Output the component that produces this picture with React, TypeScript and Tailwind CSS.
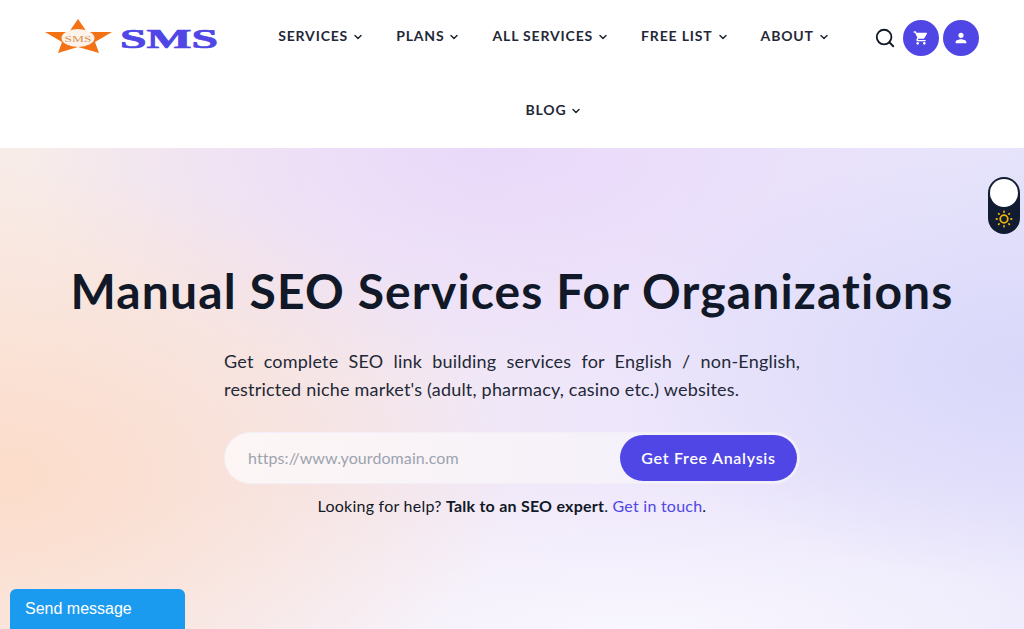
import { ChevronDown, Search } from "lucide-react";

const NAV = ["SERVICES", "PLANS", "ALL SERVICES", "FREE LIST", "ABOUT", "BLOG"];
const FONT = "font-['Lato','Noto_Sans',sans-serif]";

function Logo() {
  return (
    <svg width="176" height="40" viewBox="0 0 176 40" className="shrink-0">
      <polygon fill="#f47216" points="33,3 42,16 67,16 50,26 54,37 33,31 13,37 17,26 0,16 24,16" />
      <ellipse cx="33" cy="22" rx="16.5" ry="9" fill="#fdf3ea" />
      <text x="33" y="25.5" textAnchor="middle" fontFamily="Liberation Serif, serif" fontSize="9" fill="#d8904f" textLength="27" lengthAdjust="spacingAndGlyphs">SMS</text>
      <text x="75" y="32" fontFamily="Liberation Serif, serif" fontWeight="700" fontSize="27" fill="#4f46e5" stroke="#4f46e5" strokeWidth="0.7" textLength="98" lengthAdjust="spacingAndGlyphs">SMS</text>
    </svg>
  );
}

function CartIcon() {
  return (
    <svg viewBox="0 0 24 24" width="16" height="16" fill="#fff">
      <path d="M7 18c-1.1 0-2 .9-2 2s.9 2 2 2 2-.9 2-2-.9-2-2-2zM1 2v2h2l3.6 7.59-1.35 2.45c-.16.28-.25.61-.25.96 0 1.1.9 2 2 2h12v-2H7.42c-.14 0-.25-.11-.25-.25l.03-.12.9-1.63h7.45c.75 0 1.41-.41 1.75-1.03l3.58-6.49A1 1 0 0 0 20 4H5.21l-.94-2H1zm16 16c-1.1 0-2 .9-2 2s.9 2 2 2 2-.9 2-2-.9-2-2-2z" />
    </svg>
  );
}

function UserIcon() {
  return (
    <svg viewBox="0 0 24 24" width="16" height="16" fill="#fff">
      <path d="M12 12c2.21 0 4-1.79 4-4s-1.79-4-4-4-4 1.79-4 4 1.79 4 4 4zm0 2c-2.67 0-8 1.34-8 4v2h16v-2c0-2.66-5.33-4-8-4z" />
    </svg>
  );
}

function SunIcon() {
  const rays = [0, 45, 90, 135, 180, 225, 270, 315];
  return (
    <svg viewBox="0 0 20 20" width="18" height="18" fill="none" stroke="#eab308" strokeWidth="2" strokeLinecap="round">
      <circle cx="10" cy="10" r="4.2" />
      {rays.map((r) => (
        <line key={r} x1="10" y1="1.6" x2="10" y2="2.2" transform={`rotate(${r} 10 10)`} />
      ))}
    </svg>
  );
}

export default function App() {
  return (
    <div className={`relative h-[629px] w-[1024px] overflow-hidden bg-white text-[#111827] ${FONT}`}>
      <header className="flex h-[148px] items-start bg-white pl-[45px] pr-[45px] pt-[16px]">
        <Logo />
        <nav className="ml-[33px] flex w-[600px] flex-wrap justify-center">
          {NAV.map((n) => (
            <a key={n} className="mb-[34px] flex h-[40px] items-center px-[16px] pb-[1px] text-[14px] font-bold leading-[20px] tracking-[0.06em] text-[#1f2937] last:mb-0">
              {n}
              <ChevronDown size={12} strokeWidth={3} className="ml-[4px] mt-[2px]" />
            </a>
          ))}
        </nav>
        <div className="ml-auto flex items-center pt-[4px]">
          <span className="flex h-[36px] w-[36px] items-center justify-center">
            <Search size={22} strokeWidth={2} color="#111827" />
          </span>
          <span className="flex h-[36px] w-[36px] items-center justify-center rounded-full bg-[#4f46e5]"><CartIcon /></span>
          <span className="ml-[4px] flex h-[36px] w-[36px] items-center justify-center rounded-full bg-[#4f46e5]"><UserIcon /></span>
        </div>
      </header>

      <main className="relative flex h-[481px] flex-col items-center bg-[radial-gradient(ellipse_50%_65%_at_0%_68%,#fcdcca_0%,rgba(252,220,202,0)_100%),radial-gradient(ellipse_40%_45%_at_100%_45%,#d9d8fa_0%,rgba(217,216,250,0)_100%),radial-gradient(ellipse_45%_50%_at_48%_0%,#e9d9fa_0%,rgba(233,217,250,0)_100%),radial-gradient(ellipse_75%_35%_at_62%_100%,#f8f6fe_0%,rgba(248,246,254,0)_100%),linear-gradient(90deg,#f8ece8_0%,#eee6fb_60%,#e6e3fb_100%)]">
        <h1 className="mt-[113px] whitespace-nowrap text-[48px] font-bold leading-[60px] tracking-[1.13px] text-[#111827]">
          Manual SEO Services For Organizations
        </h1>
        <p className="mt-[26px] w-[576px] text-justify text-[18px] leading-[28px] tracking-[0.2px] text-[#1f2937]">
          Get complete SEO link building services for English / non-English, restricted niche market's (adult, pharmacy, casino etc.) websites.
        </p>
        <form className="mt-[29px] flex h-[52px] w-[576px] items-center rounded-full border border-[#f3eff8] bg-gradient-to-r from-[#fdf6f5] to-[#f2effc] pl-[23px] pr-[2px]">
          <input
            readOnly
            placeholder="https://www.yourdomain.com"
            className="min-w-0 flex-1 bg-transparent text-[16px] tracking-[0.08px] text-[#9ca3af] outline-none placeholder:text-[#9ca3af]"
          />
          <button type="button" className="h-[46px] w-[177px] rounded-full bg-[#4f46e5] pb-[1px] text-[16px] font-semibold tracking-[0.72px] text-white">
            Get Free Analysis
          </button>
        </form>
        <p className="mt-[10px] text-[16px] leading-[24px] tracking-[0.24px] text-[#111827]">
          Looking for help? <b className="font-bold">Talk to an SEO expert</b>. <a className="text-[#4f46e5]">Get in touch</a>.
        </p>

        <div className="absolute right-[4px] top-[29px] flex h-[57px] w-[32px] flex-col items-center rounded-full bg-[#111c33] pt-[2px]">
          <span className="h-[28px] w-[28px] rounded-full bg-white" />
          <span className="mt-[3px]"><SunIcon /></span>
        </div>
      </main>

      <div className="absolute bottom-0 left-[10px] flex h-[40px] w-[175px] items-center rounded-t-[6px] bg-[#1b9bf0] pl-[15px] font-['Liberation_Sans',sans-serif] text-[16px] text-white">
        Send message
      </div>
    </div>
  );
}
